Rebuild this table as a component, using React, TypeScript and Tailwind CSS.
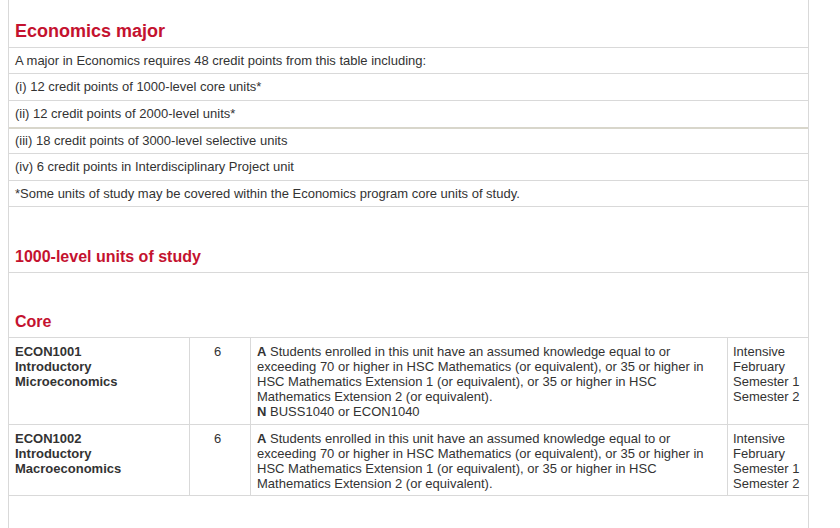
const rows = [
  { text: "A major in Economics requires 48 credit points from this table including:", h: "h-[26px]" },
  { text: "(i) 12 credit points of 1000-level core units*", h: "h-[27px]" },
  { text: "(ii) 12 credit points of 2000-level units*", h: "h-[27px]" },
  { text: "(iii) 18 credit points of 3000-level selective units", h: "h-[26px]" },
  { text: "(iv) 6 credit points in Interdisciplinary Project unit", h: "h-[27px]" },
  { text: "*Some units of study may be covered within the Economics program core units of study.", h: "h-[26px]" },
];

const assumed =
  "Students enrolled in this unit have an assumed knowledge equal to or exceeding 70 or higher in HSC Mathematics (or equivalent), or 35 or higher in HSC Mathematics Extension 1 (or equivalent), or 35 or higher in HSC Mathematics Extension 2 (or equivalent).";

const units = [
  { code: "ECON1001", name: ["Introductory", "Microeconomics"], cp: "6", n: "BUSS1040 or ECON1040", pad: "pb-[5px]" },
  { code: "ECON1002", name: ["Introductory", "Macroeconomics"], cp: "6", n: "", pad: "pb-[4px]" },
];

const sessions = ["Intensive", "February", "Semester 1", "Semester 2"];

export default function App() {
  return (
    <div className="min-h-screen bg-white font-['Liberation_Sans',Arial,sans-serif] text-[#333]">
      <div className="ml-[8px] w-[801px] min-h-screen border-x border-[#d9d9d9]">
        <div className="h-[47px] flex items-end px-[6px] pb-[5px]">
          <h2 className="text-[18px] leading-[21px] font-bold text-[#c4122f]">Economics major</h2>
        </div>

        {rows.map((r, i) => (
          <div
            key={i}
            className={
              i === 3
                ? `${r.h} flex items-center px-[6px] text-[13px] border-t-2 border-[#d8d6cb]`
                : `${r.h} flex items-center px-[6px] text-[13px] border-t border-[#d9d9d9]`
            }
          >
            {r.text}
          </div>
        ))}

        <div className="h-[66px] flex items-end px-[6px] pb-[6px] border-t border-[#d9d9d9]">
          <h3 className="text-[16px] leading-[19px] font-bold text-[#c4122f]">1000-level units of study</h3>
        </div>

        <div className="h-[65px] flex items-end px-[6px] pb-[6px] border-t border-[#d9d9d9]">
          <h3 className="text-[16px] leading-[19px] font-bold text-[#c4122f]">Core</h3>
        </div>

        {units.map((u) => (
          <div
            key={u.code}
            className="grid grid-cols-[180px_61px_477px_81px] border-t border-[#d9d9d9] text-[13px] leading-[15px]"
          >
            <div className={`pl-[6px] pr-[6px] pt-[6px] ${u.pad} font-bold`}>
              <div>{u.code}</div>
              {u.name.map((l) => (
                <div key={l}>{l}</div>
              ))}
            </div>
            <div className={`border-l border-[#d9d9d9] pl-[24px] pt-[6px] ${u.pad}`}>{u.cp}</div>
            <div className={`border-l border-[#d9d9d9] px-[6px] pt-[6px] ${u.pad}`}>
              <div>
                <span className="font-bold">A</span> {assumed}
              </div>
              {u.n && (
                <div>
                  <span className="font-bold">N</span> {u.n}
                </div>
              )}
            </div>
            <div className={`border-l border-[#d9d9d9] pl-[5px] pr-[2px] pt-[6px] ${u.pad}`}>
              {sessions.map((s) => (
                <div key={s}>{s}</div>
              ))}
            </div>
          </div>
        ))}
        <div className="border-t border-[#d9d9d9]" />
      </div>
    </div>
  );
}
